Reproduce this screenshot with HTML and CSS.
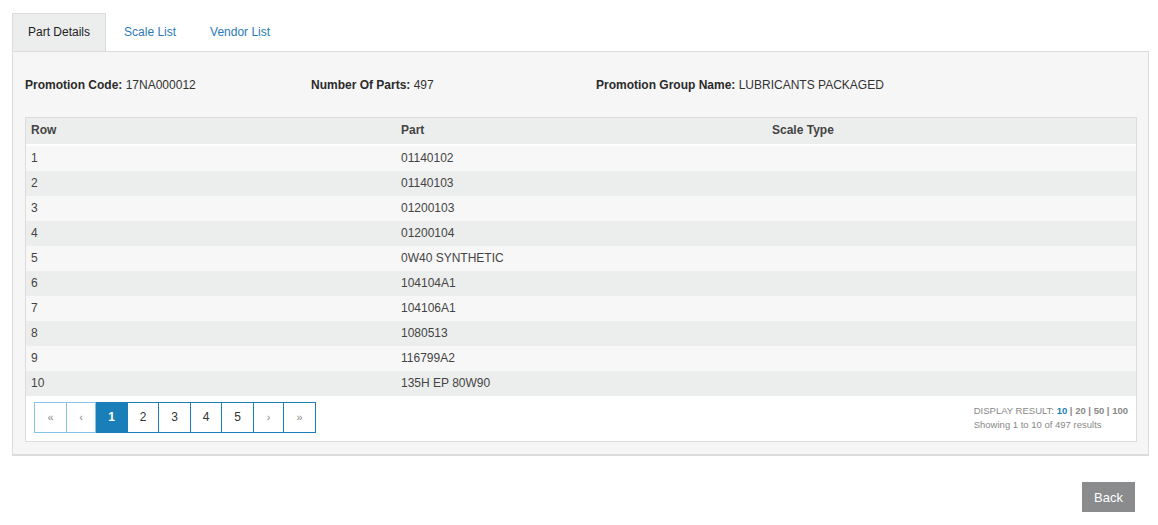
FILE: index.html
```html
<!DOCTYPE html>
<html>
<head>
<meta charset="utf-8">
<link rel="stylesheet" href="styles.css">
</head>
<body>
<div class="page">
  <ul class="tabs">
    <li class="tab active">Part Details</li>
    <li class="tab">Scale List</li>
    <li class="tab">Vendor List</li>
  </ul>
  <div class="panel">
    <div class="info">
      <div><b>Promotion Code:</b> 17NA000012</div>
      <div><b>Number Of Parts:</b> 497</div>
      <div><b>Promotion Group Name:</b> LUBRICANTS PACKAGED</div>
    </div>
    <div class="tablebox">
      <div class="thead">
        <div>Row</div><div>Part</div><div>Scale Type</div>
      </div>
      <div class="tbody">
        <div class="tr"><div>1</div><div>01140102</div><div></div></div>
        <div class="tr"><div>2</div><div>01140103</div><div></div></div>
        <div class="tr"><div>3</div><div>01200103</div><div></div></div>
        <div class="tr"><div>4</div><div>01200104</div><div></div></div>
        <div class="tr"><div>5</div><div>0W40 SYNTHETIC</div><div></div></div>
        <div class="tr"><div>6</div><div>104104A1</div><div></div></div>
        <div class="tr"><div>7</div><div>104106A1</div><div></div></div>
        <div class="tr"><div>8</div><div>1080513</div><div></div></div>
        <div class="tr"><div>9</div><div>116799A2</div><div></div></div>
        <div class="tr"><div>10</div><div>135H EP 80W90</div><div></div></div>
      </div>
      <div class="footer">
        <div class="pager">
          <span class="pg dis arrow">&laquo;</span>
          <span class="pg dis arrow">&lsaquo;</span>
          <span class="pg cur">1</span>
          <span class="pg">2</span>
          <span class="pg">3</span>
          <span class="pg">4</span>
          <span class="pg">5</span>
          <span class="pg arrow">&rsaquo;</span>
          <span class="pg arrow">&raquo;</span>
        </div>
        <div class="results">
          <div>DISPLAY RESULT: <b class="sel">10</b> <b>| 20 | 50 | 100</b></div>
          <div>Showing 1 to 10 of 497 results</div>
        </div>
      </div>
    </div>
  </div>
  <div class="actions">
    <button class="back">Back</button>
  </div>
</div>
</body>
</html>
```
FILE: styles.css
```css
body {
  margin: 0;
  font-family: "Liberation Sans", Arial, sans-serif;
  font-size: 12px;
  color: #333;
  background: #fff;
}
.page {
  padding: 13px 9px 0 12px;
}
.tabs {
  list-style: none;
  margin: 0;
  padding: 0;
  display: flex;
  height: 38px;
}
.tab {
  padding: 0 15px 0 17px;
  line-height: 37px;
  color: #2a7ab8;
  border: 1px solid transparent;
  border-bottom: none;
}
.tab.active {
  padding: 0 15px;
  background: #eceeed;
  border-color: #dcdcdc;
  color: #222;
}
.panel {
  background: #f6f6f6;
  border: 1px solid #dcdcdc;
  border-bottom-width: 2px;
  padding: 0 11px 12px 12px;
}
.info {
  display: grid;
  grid-template-columns: 286px 285px auto;
  height: 64px;
  align-items: center;
  padding-top: 1px;
}
.info b {
  color: #2b2b2b;
}
.tablebox {
  background: #fff;
  border: 1px solid #dcdcdc;
}
.thead, .tr {
  display: grid;
  grid-template-columns: 370px 371px 1fr;
}
.thead {
  height: 26px;
  line-height: 25px;
  background: #eceeed;
  font-weight: bold;
  color: #444;
  margin-bottom: 2px;
}
.thead div, .tr div {
  padding-left: 5px;
}
.tr {
  height: 25px;
  line-height: 25px;
  color: #444;
}
.tr:nth-child(odd) {
  background: #f7f7f7;
}
.tr:nth-child(even) {
  background: #eceeed;
}
.footer {
  display: flex;
  justify-content: space-between;
  align-items: center;
  padding: 6px 8px 8px 8px;
}
.pager {
  display: flex;
}
.pg {
  width: 31px;
  height: 29px;
  line-height: 29px;
  text-align: center;
  border: 1px solid #1a7fb8;
  margin-left: -1px;
  color: #333;
  font-size: 12px;
  background: #fff;
}
.pg:first-child {
  margin-left: 0;
}
.pg:nth-child(2) {
  width: 28px;
}
.pg:nth-child(4), .pg:nth-child(6) {
  width: 30px;
}
.pg:nth-child(8) {
  width: 29px;
}
.pg.dis {
  border-color: #86c3e6;
  color: #888;
  position: relative;
}
.pg.arrow {
  color: #888;
  font-size: 11px;
}
.pg.cur {
  background: #1a7fb8;
  color: #fff;
  font-weight: bold;
}
.results {
  font-size: 9.5px;
  color: #888;
  line-height: 14px;
  text-align: left;
  padding-top: 1px;
}
.results b {
  color: #888;
}
.results b.sel {
  color: #1a7fb8;
}
.actions {
  display: flex;
  justify-content: flex-end;
  padding: 26px 14px 0 0;
}
.back {
  width: 53px;
  height: 30px;
  border: none;
  background: #8a8b8d;
  color: #fff;
  font-family: "Liberation Sans", Arial, sans-serif;
  font-size: 13px;
  padding: 0;
}
```
